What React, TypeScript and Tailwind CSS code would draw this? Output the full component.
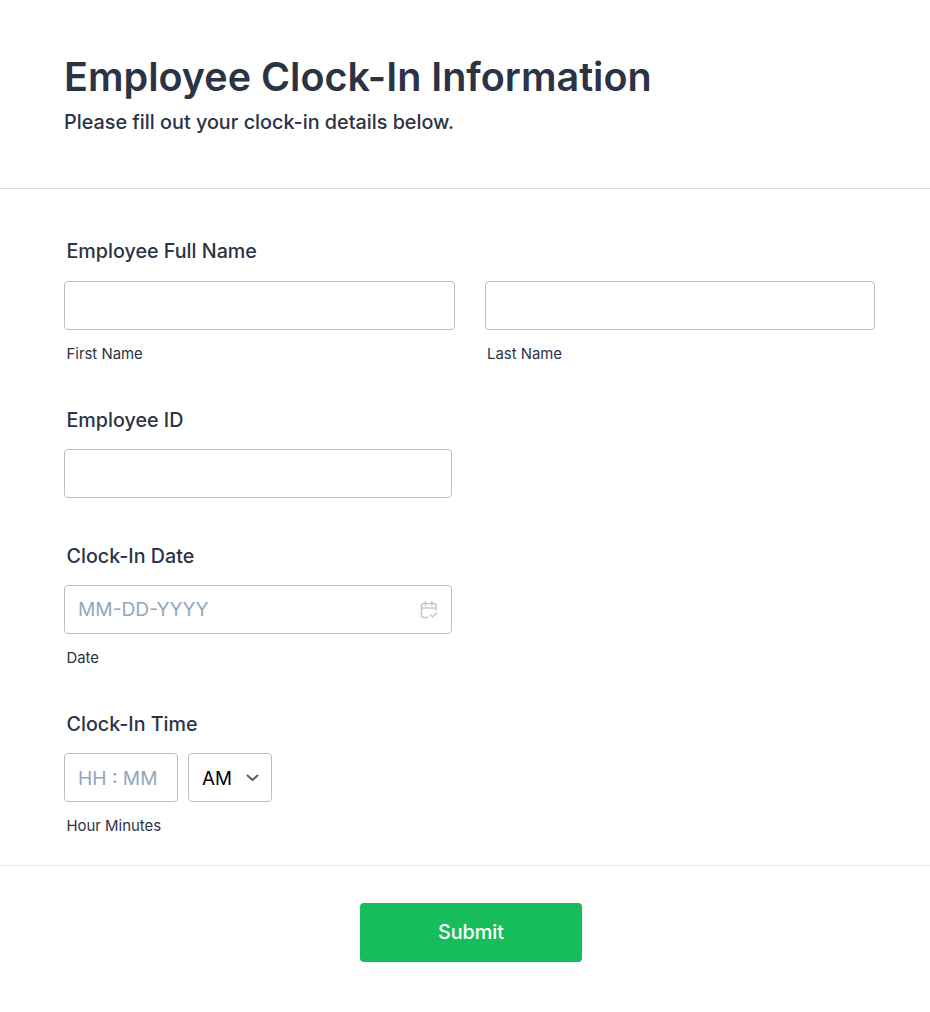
import React from "react";

const inputCls = "h-[49px] border border-[#b8bdc9] rounded-[4px] bg-white px-[13px] text-[19.2px] leading-[28px] text-[#2c3345] outline-none placeholder:text-[#8fa8bc] font-['Inter',sans-serif]";

function Label({ children }: { children: React.ReactNode }) {
  return <div className="pl-[2.5px] h-[29px] text-[19.7px] leading-[29px] font-[450] text-[#2c3345]">{children}</div>;
}
function Sub({ children }: { children: React.ReactNode }) {
  return <div className="pl-[2.5px] mt-[14px] h-[20px] text-[14.9px] leading-[20px] text-[#2c3345]">{children}</div>;
}

export default function App() {
  return (
    <div className="w-[930px] h-[1012px] bg-white font-['Inter',sans-serif] text-[#2c3345] overflow-hidden">
      <header className="h-[189px] border-b border-[#d8d8e8] pl-[64px] pt-[52px]">
        <h1 className="text-[39.5px] leading-[50px] font-semibold">Employee Clock-In Information</h1>
        <p className="text-[19.8px] leading-[28px] font-[450] mt-[6px]">Please fill out your clock-in details below.</p>
      </header>
      <main className="h-[677px] border-b border-[#eaebf2] pl-[64px] pt-[48px]">
        <Label>Employee Full Name</Label>
        <div className="mt-[15px] flex gap-[30px]">
          <div className="w-[390.5px]">
            <input className={inputCls + " w-full block"} aria-label="First Name" />
            <Sub>First Name</Sub>
          </div>
          <div className="w-[390.5px]">
            <input className={inputCls + " w-full block"} aria-label="Last Name" />
            <Sub>Last Name</Sub>
          </div>
        </div>
        <div className="mt-[42px]"><Label>Employee ID</Label></div>
        <input className={inputCls + " w-[388px] block mt-[14px]"} aria-label="Employee ID" />
        <div className="mt-[44px]"><Label>Clock-In Date</Label></div>
        <div className="mt-[14px] w-[388px] h-[49px] border border-[#b8bdc9] rounded-[4px] flex items-center justify-between pl-[13px] pr-[12px]">
          <input className="flex-1 min-w-0 text-[19.2px] outline-none placeholder:text-[#8fa8bc]" placeholder="MM-DD-YYYY" aria-label="Date" />
          <svg width="20" height="20" viewBox="0 0 20 20" fill="none" stroke="#c3c8d6" strokeWidth="1.6" strokeLinecap="round" strokeLinejoin="round">
            <path d="M9 17.5H4.5A2 2 0 0 1 2.5 15.5V5.5A2 2 0 0 1 4.5 3.5H15A2 2 0 0 1 17 5.5V10" />
            <path d="M6.5 1.5V5.5M13 1.5V5.5M2.5 8H17" />
            <path d="M11.5 15L13.5 17L17.5 13" />
          </svg>
        </div>
        <Sub>Date</Sub>
        <div className="mt-[42px]"><Label>Clock-In Time</Label></div>
        <div className="mt-[14px] flex gap-[10px]">
          <input className={inputCls + " w-[114px] block"} placeholder="HH : MM" aria-label="Hour Minutes" />
          <div className="w-[84px] h-[49px] border border-[#b8bdc9] rounded-[4px] flex items-center justify-between pl-[13px] pr-[12px] text-[18.8px] text-black">
            <span className="leading-[30px] pt-[2px]">AM</span>
            <svg width="13" height="8" viewBox="0 0 13 8" fill="none" stroke="#545f78" strokeWidth="2" strokeLinecap="round" strokeLinejoin="round">
              <path d="M1.5 1.5L6.5 6L11.5 1.5" />
            </svg>
          </div>
        </div>
        <Sub>Hour Minutes</Sub>
      </main>
      <div className="pl-[360px] pt-[37px]">
        <button className="w-[222px] h-[59px] rounded-[4px] bg-[#18bd5b] text-white text-[19.8px] font-medium font-['Inter',sans-serif]">Submit</button>
      </div>
    </div>
  );
}
